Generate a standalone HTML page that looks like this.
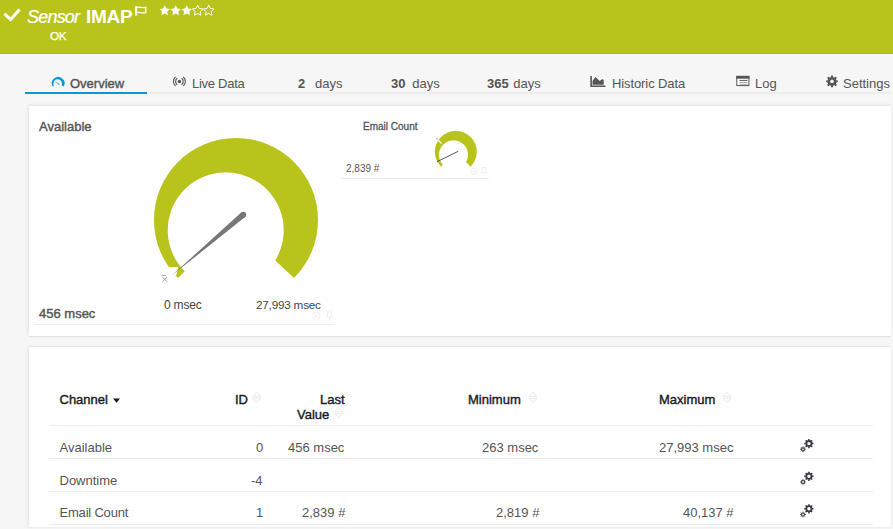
<!DOCTYPE html>
<html><head><meta charset="utf-8">
<style>
*{margin:0;padding:0;box-sizing:border-box}
html,body{width:893px;height:529px;overflow:hidden;background:#f6f6f6;font-family:"Liberation Sans",sans-serif}
.a{position:absolute;white-space:nowrap;line-height:1}
#hdr{position:absolute;left:0;top:0;width:893px;height:54px;background:#b8c41c;border-bottom:1px solid #aebb16}
.w{color:#fff}
.tab{color:#555;font-size:13px}
.tabline{position:absolute;left:25px;top:92px;width:866px;height:2px;background:#ececec}
.tabsel{position:absolute;left:25px;top:92px;width:122px;height:2px;background:#0798d5}
.panel{position:absolute;left:29px;width:862px;background:#fff;box-shadow:-1px -1px 3px rgba(0,0,0,.09),0 1px 0 #e6e6e6}
.md{-webkit-text-stroke:0.35px currentColor}
.hd{color:#1a1a24;font-size:13px;-webkit-text-stroke:0.4px currentColor}
.rw{color:#555;font-size:13px}
.sep{position:absolute;height:1px;background:#ededed}
</style></head><body>
<div id="hdr"></div>
<!-- header -->
<div class="a w" style="left:27px;top:8px;font-size:18px;font-style:italic;letter-spacing:-0.8px;-webkit-text-stroke:0.2px #fff">Sensor</div>
<div class="a w" style="left:86px;top:7px;font-size:19px;font-weight:bold;letter-spacing:-0.3px">IMAP</div>
<div class="a w" style="left:50px;top:31px;font-size:11.8px;letter-spacing:-0.4px;-webkit-text-stroke:0.25px #fff">OK</div>

<!-- tabs -->
<div class="tabline"></div>
<div class="tabsel"></div>
<div class="a tab" style="left:70px;top:77px;-webkit-text-stroke:0.4px #555">Overview</div>
<div class="a tab" style="left:192px;top:77px;letter-spacing:-0.27px">Live Data</div>
<div class="a tab" style="left:298px;top:77px;font-weight:bold">2</div><div class="a tab" style="left:315px;top:77px">days</div>
<div class="a tab" style="left:391px;top:77px;font-weight:bold">30</div><div class="a tab" style="left:412.3px;top:77px">days</div>
<div class="a tab" style="left:487px;top:77px;font-weight:bold">365</div><div class="a tab" style="left:513.2px;top:77px">days</div>
<div class="a tab" style="left:612px;top:77px;letter-spacing:-0.1px">Historic Data</div>
<div class="a tab" style="left:755px;top:77px">Log</div>
<div class="a tab" style="left:843px;top:77px">Settings</div>

<!-- panel 1 -->
<div class="panel" style="top:106px;height:230px"></div>
<div class="a" style="left:39px;top:120px;font-size:13px;color:#555;-webkit-text-stroke:0.4px #555">Available</div>
<div class="a" style="left:39px;top:307px;font-size:13px;color:#555;-webkit-text-stroke:0.4px #555">456 msec</div>
<div class="sep" style="left:34px;top:324px;width:301px"></div>
<div class="a" style="left:164px;top:298.5px;font-size:12px;color:#444;letter-spacing:-0.2px">0 msec</div>
<div class="a" style="left:256px;top:299px;font-size:11.7px;color:#444;letter-spacing:-0.2px">27,993 msec</div>

<div class="a" style="left:363px;top:121.5px;font-size:10px;color:#555;-webkit-text-stroke:0.3px #555">Email Count</div>
<div class="a" style="left:346px;top:163.5px;font-size:10px;color:#555">2,839 #</div>
<div class="sep" style="left:341px;top:178px;width:148px"></div>

<!-- panel 2 -->
<div class="panel" style="top:347px;height:180px;box-shadow:-1px 0 3px rgba(0,0,0,.08),0 -1px 1px rgba(0,0,0,.04)"></div>
<div class="a hd" style="left:59.5px;top:393px">Channel</div>
<div class="a hd" style="left:235px;top:393px">ID</div>
<div class="a hd" style="left:320px;top:393px">Last</div>
<div class="a hd" style="left:297px;top:408px">Value</div>
<div class="a hd" style="left:468px;top:393px">Minimum</div>
<div class="a hd" style="left:659px;top:393px">Maximum</div>
<div class="sep" style="left:49px;top:425px;width:824px"></div>

<div class="a rw" style="left:59.5px;top:441px">Available</div>
<div class="a rw" style="left:256px;top:441px">0</div>
<div class="a rw" style="left:288px;top:441px">456 msec</div>
<div class="a rw" style="left:482px;top:441px">263 msec</div>
<div class="a rw" style="left:659px;top:441px">27,993 msec</div>
<div class="sep" style="left:49px;top:458px;width:824px"></div>

<div class="a rw" style="left:59.5px;top:474px">Downtime</div>
<div class="a rw" style="left:251px;top:474px">-4</div>
<div class="sep" style="left:49px;top:491px;width:824px"></div>

<div class="a rw" style="left:59.5px;top:506px;letter-spacing:-0.2px">Email Count</div>
<div class="a rw" style="left:256px;top:506px">1</div>
<div class="a rw" style="left:302px;top:506px">2,839 #</div>
<div class="a rw" style="left:496px;top:506px">2,819 #</div>
<div class="a rw" style="left:683px;top:506px">40,137 #</div>
<div class="sep" style="left:49px;top:524px;width:824px"></div>
<svg style="position:absolute;left:0;top:0" width="893" height="529" viewBox="0 0 893 529">
<defs>
<path id="st" d="M5.30 0.10 L6.92 3.38 L10.53 3.90 L7.92 6.45 L8.53 10.05 L5.30 8.35 L2.07 10.05 L2.68 6.45 L0.07 3.90 L3.68 3.38 Z"/>
<g id="gr"><path d="M4.5 0 L5.4 1.2 L6.9 0.7 L7.1 2.2 L8.6 2.6 L8.1 4.1 L9 5.3 L7.8 6.1 L7.9 7.6 L6.4 7.6 L5.7 9 L4.5 8.1 L3.3 9 L2.6 7.6 L1.1 7.6 L1.2 6.1 L0 5.3 L0.9 4.1 L0.4 2.6 L1.9 2.2 L2.1 0.7 L3.6 1.2 Z" transform="translate(-4.5 -4.5)"/></g>
<g id="cog"><circle r="2.6" fill="none" stroke="#3a3a44" stroke-width="1.8"/><path d="M0 -4.6 V-3 M0 4.6 V3 M-4.6 0 H-3 M4.6 0 H3 M-3.25 -3.25 L-2.2 -2.2 M3.25 3.25 L2.2 2.2 M-3.25 3.25 L-2.2 2.2 M3.25 -3.25 L2.2 -2.2" stroke="#3a3a44" stroke-width="1.5"/></g>
<g id="cogs"><circle r="1.5" fill="none" stroke="#3a3a44" stroke-width="1.2"/><path d="M0 -2.9 V-1.8 M0 2.9 V1.8 M-2.9 0 H-1.8 M2.9 0 H1.8 M-2.05 -2.05 L-1.3 -1.3 M2.05 2.05 L1.3 1.3 M-2.05 2.05 L-1.3 1.3 M2.05 -2.05 L1.3 -1.3" stroke="#3a3a44" stroke-width="0.9"/></g>
<g id="sort"><path d="M-4 -0.8 L0 -5.3 L4 -0.8 Z M-4 0.8 L0 5.3 L4 0.8 Z" fill="#fbfbfb" stroke="#e2e2e2" stroke-width="0.7"/></g>
</defs>
<!-- header icons -->
<path d="M5.6 14.9 L10.6 19.6 L18.6 10.6" fill="none" stroke="#fff" stroke-width="3" stroke-linecap="square"/>
<path d="M136.1 6.2 V15.7" stroke="#fff" stroke-width="2"/>
<path d="M137 7.3 C140 6.3 142 8.3 145.8 7.3 V12.6 C142 13.6 140 11.6 137 12.6" fill="none" stroke="#fff" stroke-width="1.3"/>
<use href="#st" x="159.4" y="5.1" fill="#fff"/>
<use href="#st" x="170.4" y="5.1" fill="#fff"/>
<use href="#st" x="181.4" y="5.1" fill="#fff"/>
<use href="#st" x="192.4" y="5.1" fill="none" stroke="#fff" stroke-width="1"/>
<use href="#st" x="203.4" y="5.1" fill="none" stroke="#fff" stroke-width="1"/>
<!-- tab icons -->
<path d="M52.61 86.5 A6.4 6.4 0 1 1 63.69 86.5 L61.64 85.32 A4.3 4.3 0 1 0 53.96 85.72 Z" fill="#0798d5"/>
<path d="M54.2 80.9 L59.7 84.1 L59 85 Z" fill="#2aa6dc"/>
<circle cx="179.4" cy="81.5" r="1.7" fill="#555"/>
<path d="M177.2 78.3 A4 4 0 0 0 177.2 84.7 M181.6 78.3 A4 4 0 0 1 181.6 84.7 M175.5 77 A6 6 0 0 0 175.5 86 M183.3 77 A6 6 0 0 1 183.3 86" fill="none" stroke="#555" stroke-width="1.1"/>
<path d="M591.1 75.9 V86.2 H605.4" fill="none" stroke="#555" stroke-width="1.6"/>
<path d="M592.5 84.8 V81 L595.5 77.1 L599.6 81 L602.5 79 L603.7 80 V84.8 Z" fill="#555"/>
<rect x="736.8" y="76.4" width="12.1" height="9.2" fill="#fff" stroke="#555" stroke-width="1"/>
<rect x="736.3" y="75.9" width="13.1" height="2.8" fill="#555"/>
<path d="M739.5 80.4 H747.5" stroke="#555" stroke-width="1"/>
<path d="M739.5 82.5 H747.5 M739.5 84.3 H747.5" stroke="#aaa" stroke-width="1"/>
<g transform="translate(832 81.2)"><path d="M-0.9 -5.6 H0.9 L1.2 -3.9 L2.2 -3.5 L3.6 -4.6 L4.9 -3.3 L3.9 -1.9 L4.3 -0.9 L5.8 -0.7 V1.1 L4.3 1.3 L3.9 2.3 L4.9 3.7 L3.6 5 L2.2 4 L1.2 4.4 L0.9 6 H-0.9 L-1.2 4.4 L-2.2 4 L-3.6 5 L-4.9 3.7 L-3.9 2.3 L-4.3 1.3 L-5.8 1.1 V-0.7 L-4.3 -0.9 L-3.9 -1.9 L-4.9 -3.3 L-3.6 -4.6 L-2.2 -3.5 L-1.2 -3.9 Z" fill="#555"/><circle cx="0" cy="0.2" r="1.8" fill="#f6f6f6"/></g>
<!-- big gauge -->
<path d="M178 278 A82 82 0 1 1 294 278 L275.3 260.4 A58 58 0 1 0 184.7 271.3 Z" fill="#b8c41c"/>
<path d="M160 266.9 L178.2 266.9 L176.4 275.1 L160 275.1 Z" fill="#fff"/>
<path d="M172 275.3 L241.2 212.6 L245.4 216.8 Z" fill="#777"/>
<circle cx="243.3" cy="214.7" r="2.9" fill="#777"/>
<path d="M161.6 275.4 H166.2" stroke="#999" stroke-width="0.8"/>
<path d="M162.6 277 L167 281.6 M167 277 L162.6 281.6" stroke="#999" stroke-width="0.9"/>
<g transform="translate(316.4 315.8)" fill="none" stroke="#f0f0f0" stroke-width="1"><circle r="3.6"/><circle r="1.3"/></g>
<path d="M326 311 H333 M327.5 311 V317 M331.5 311 V317 M325.5 317 H333.5 M329.5 317 V321" fill="none" stroke="#f0f0f0" stroke-width="1"/>
<!-- mini gauge -->
<path d="M440.95 166.65 A21 21 0 1 1 470.65 166.65 L466.05 162.05 A14.5 14.5 0 1 0 442.9 164.7 Z" fill="#b8c41c"/>
<path d="M436.8 138.6 L441.5 143.5" stroke="#fff" stroke-width="1.3"/>
<path d="M436.6 138.3 L437.8 139.6" stroke="#667" stroke-width="0.8"/>
<path d="M437 161.8 L458.2 151.3" stroke="#555" stroke-width="1"/>
<g transform="translate(474 171.3)" fill="none" stroke="#f0f0f0" stroke-width="1"><circle r="3.2"/><circle r="1.1"/></g>
<path d="M481 167.5 H487 M482.3 167.5 V172.5 M485.7 167.5 V172.5 M480.7 172.5 H487.3 M484 172.5 V175.5" fill="none" stroke="#f0f0f0" stroke-width="1"/>
<!-- table -->
<path d="M113 398.4 H120 L116.5 402.7 Z" fill="#1a1a24"/>
<use href="#sort" x="256.7" y="397.5"/>
<use href="#sort" x="338.7" y="412.5"/>
<use href="#sort" x="532.9" y="397.5"/>
<use href="#sort" x="727" y="397.5"/>
<use href="#cog" x="808.9" y="443.6"/><use href="#cogs" x="803" y="449.3"/>
<use href="#cog" x="808.9" y="476.3"/><use href="#cogs" x="803" y="482"/>
<use href="#cog" x="808.9" y="508.8"/><use href="#cogs" x="803" y="514.5"/>
</svg>
</body></html>
